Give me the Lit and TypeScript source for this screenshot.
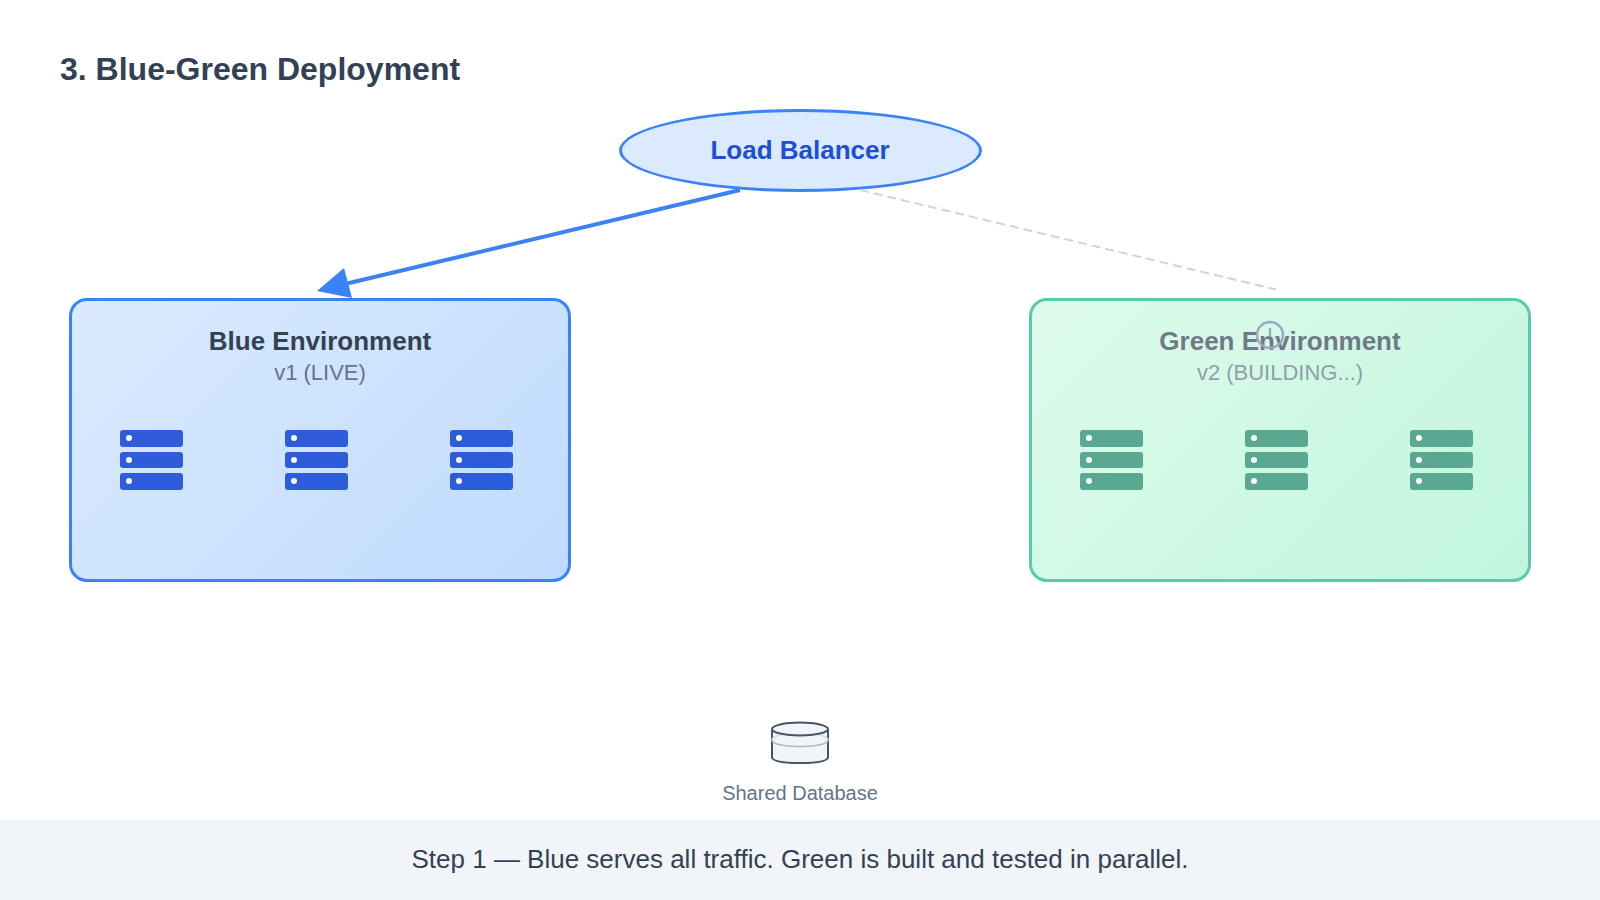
import { LitElement, html, css, svg } from 'lit';
import { customElement } from 'lit/decorators.js';

@customElement('app-root')
export class AppRoot extends LitElement {
  static styles = css`
    :host {
      display: block;
      width: 1600px;
      height: 900px;
      background: #ffffff;
      font-family: 'Liberation Sans', Arial, sans-serif;
    }

    .page {
      position: relative;
      display: flex;
      flex-direction: column;
      width: 1600px;
      height: 900px;
      overflow: hidden;
    }

    .title {
      margin: 0;
      padding: 50px 0 0 60px;
      height: 59px;
      font-size: 32px;
      line-height: 38px;
      font-weight: 700;
      color: #334155;
    }

    .balancer {
      align-self: center;
      display: flex;
      align-items: center;
      justify-content: center;
      box-sizing: border-box;
      width: 363px;
      height: 83px;
      border: 3px solid #3b82f6;
      border-radius: 50%;
      background: #dbeafe;
      color: #1d4ed8;
      font-size: 26px;
      font-weight: 700;
    }

    .envs {
      display: flex;
      justify-content: space-between;
      margin-top: 106px;
      padding: 0 69px;
    }

    .env {
      box-sizing: border-box;
      width: 502px;
      height: 284px;
      padding-top: 25px;
      border: 3px solid #3b82f6;
      border-radius: 18px;
      text-align: center;
      background: linear-gradient(135deg, #dbeafe, #bfdbfe);
    }

    .env.green {
      border-color: #10b981;
      background: linear-gradient(135deg, #d1fae5, #a7f3d0);
      opacity: 0.7;
    }

    .env-name {
      font-size: 26px;
      line-height: 30px;
      font-weight: 700;
      color: #334155;
    }

    .env-version {
      margin-top: 3px;
      font-size: 22px;
      line-height: 28px;
      color: #64748b;
    }

    .servers {
      display: flex;
      gap: 102px;
      margin-top: 43px;
      padding-left: 48px;
    }

    .server {
      display: flex;
      flex-direction: column;
      gap: 5px;
      width: 63px;
      opacity: 0.9;
    }

    .server-row {
      display: flex;
      align-items: center;
      height: 16.5px;
      padding-left: 6px;
      border-radius: 3px;
      background: #1d4ed8;
    }

    .green .server-row {
      background: #047857;
    }

    .server-dot {
      width: 6px;
      height: 6px;
      border-radius: 50%;
      background: #ffffff;
    }

    .database {
      display: flex;
      flex-direction: column;
      align-items: center;
      margin-top: 139px;
      color: #64748b;
      font-size: 20px;
      line-height: 24px;
    }

    .database svg {
      display: block;
      margin-bottom: 16px;
    }

    .caption {
      position: absolute;
      left: 0;
      right: 0;
      bottom: 0;
      box-sizing: border-box;
      height: 80px;
      padding-bottom: 2px;
      display: flex;
      align-items: center;
      justify-content: center;
      background: #f1f5f9;
      color: #334155;
      font-size: 26px;
    }

    .wires {
      position: absolute;
      inset: 0;
      pointer-events: none;
    }
  `;

  private renderServer() {
    return html`<div class="server">
      ${[0, 1, 2].map(() => html`<div class="server-row"><div class="server-dot"></div></div>`)}
    </div>`;
  }

  private renderEnv(name: string, version: string, green: boolean) {
    return html`<div class="env ${green ? 'green' : ''}">
      <div class="env-name">${name}</div>
      <div class="env-version">${version}</div>
      <div class="servers">${[0, 1, 2].map(() => this.renderServer())}</div>
    </div>`;
  }

  render() {
    return html`
      <div class="page">
        <h1 class="title">3. Blue-Green Deployment</h1>
        <div class="balancer">Load Balancer</div>
        <div class="envs">
          ${this.renderEnv('Blue Environment', 'v1 (LIVE)', false)}
          ${this.renderEnv('Green Environment', 'v2 (BUILDING...)', true)}
        </div>
        <div class="database">
          <svg width="60" height="44" viewBox="0 0 60 44">
            <path d="M2 8 V36 C2 40 12 42 30 42 C48 42 58 40 58 36 V8" fill="#f1f5f9" stroke="#475569" stroke-width="2" />
            <path d="M2 19 C2 15 14 12 30 12 C46 12 58 15 58 19" fill="none" stroke="#d5dde6" stroke-width="1.5" />
            <path d="M2 19 C2 23 14 25.5 30 25.5 C46 25.5 58 23 58 19" fill="none" stroke="#a9b6c5" stroke-width="1.5" />
            <ellipse cx="30" cy="8" rx="28" ry="6.5" fill="#f1f5f9" stroke="#475569" stroke-width="2" />
          </svg>
          Shared Database
        </div>
        <div class="caption">Step 1 — Blue serves all traffic. Green is built and tested in parallel.</div>
        <svg class="wires" width="1600" height="900" viewBox="0 0 1600 900">
          ${svg`
            <line x1="740" y1="190" x2="345" y2="284" stroke="#3b82f6" stroke-width="4" />
            <polygon points="317,291 344,268 352,298" fill="#3b82f6" />
            <line x1="860" y1="190" x2="1276" y2="289.5" stroke="#cbd5e0" stroke-width="2" stroke-dasharray="9 5" />
            <g fill="none" stroke="#9aa8c4" stroke-width="2.4">
              <circle cx="1270" cy="335" r="13" />
              <path d="M1270 328 V337" />
            </g>
          `}
        </svg>
      </div>
    `;
  }
}
